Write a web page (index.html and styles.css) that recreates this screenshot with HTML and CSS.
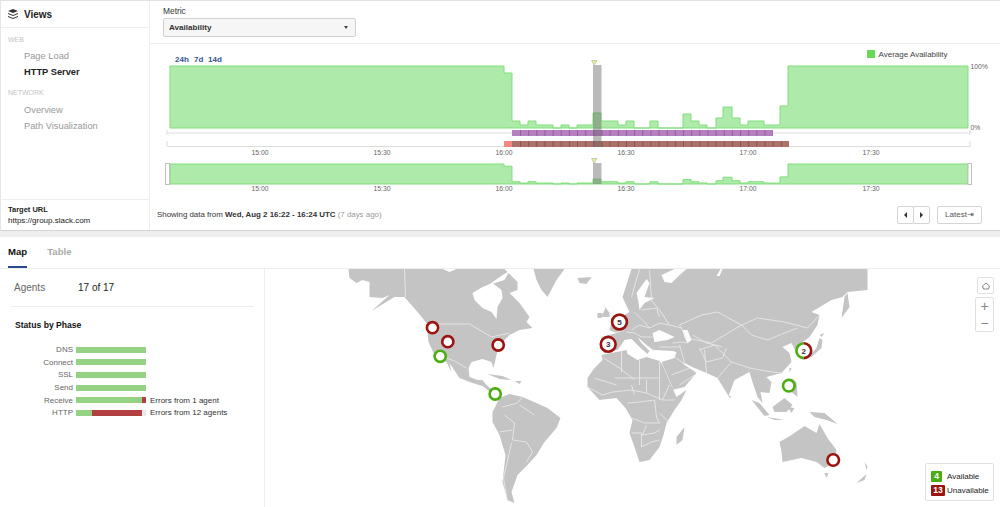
FILE: index.html
```html
<!DOCTYPE html>
<html>
<head>
    <title>HTTP Server - Availability</title>
    <link rel="stylesheet" href="styles.css">
</head>
<body>
<div class="top-panel">
    <div class="sidebar">
        <div class="views-title">
            <svg class="views-icon" viewBox="0 0 10 10">
                <path d="M5 0 L10 2 L5 4 L0 2 Z"/>
                <path d="M0 4 L5 6 L10 4 L10 5 L5 7 L0 5 Z"/>
                <path d="M0 7 L5 9 L10 7 L10 8 L5 10 L0 8 Z"/>
            </svg>
            Views
        </div>
        <div class="nav-section">WEB</div>
        <a class="nav-item">Page Load</a>
        <a class="nav-item active">HTTP Server</a>
        <div class="nav-section second">NETWORK</div>
        <a class="nav-item">Overview</a>
        <a class="nav-item">Path Visualization</a>
        <div class="target">
            <b>Target URL</b>
            <span>https://group.slack.com</span>
        </div>
    </div>
    <div class="main">
        <div class="metric-row">
            <label class="metric-label">Metric</label>
            <div class="select">Availability<span class="caret"></span></div>
        </div>
        <svg class="chart" viewBox="150 44 850 155">
            <defs>
                <path id="series" d="M170 128 V66 H504 V73 H512 V121 H520 V125 H528 V121 H536 V125 H553 V128 H561 V125 H569 V128 H577 V125 H593 V113 H601 V121 H618 V125 H626 V121 H634 V128 H650 V121 H658 V128 H683 V114 H691 V121 H699 V125 H707 V128 H716 V118 H723 V107 H732 V118 H740 V125 H748 V121 H764 V125 H780 V106 H788 V66 H968 V128 Z"/>
            </defs>
            <text class="range" x="175" y="62">24h</text>
            <text class="range" x="194" y="62">7d</text>
            <text class="range" x="208" y="62">14d</text>
            <rect class="legend-swatch" x="867" y="50" width="8" height="8"/>
            <text class="legend-text" x="878.5" y="57">Average Availability</text>
            <use class="area" href="#series"/>
            <text class="axis" x="970.5" y="69">100%</text>
            <text class="axis" x="970.5" y="130">0%</text>

            <path class="track" d="M167 130 V135 M168 133 H970 M970 130 V135"/>
            <path class="track" d="M167 141 V147 M168 146.5 H970 M970 141 V147"/>
            <rect class="bar-purple" x="512" y="130" width="261" height="6"/>
            <line class="ticks-purple" x1="520" y1="133" x2="773" y2="133"/>
            <rect class="bar-pink" x="504" y="141" width="8" height="6"/>
            <rect class="bar-brown" x="512" y="141" width="277" height="6"/>
            <line class="ticks-brown" x1="520" y1="144" x2="785" y2="144"/>
            <rect class="cursor" x="593" y="65" width="8.5" height="82"/>
            <path class="marker-tri" d="M591.5 60.5 H597 L594.2 65 Z"/>
            <text class="axis mid" x="260" y="155">15:00</text>
            <text class="axis mid" x="382" y="155">15:30</text>
            <text class="axis mid" x="504" y="155">16:00</text>
            <text class="axis mid" x="626" y="155">16:30</text>
            <text class="axis mid" x="748" y="155">17:00</text>
            <text class="axis mid" x="871" y="155">17:30</text>

            <use class="area" href="#series" transform="translate(0 142.7) scale(1 .3226)"/>
            <rect class="cursor" x="593" y="163" width="8.5" height="21"/>
            <path class="marker-tri" d="M591.5 158.5 H597 L594.2 163 Z"/>
            <rect class="handle" x="165.5" y="163.5" width="4" height="21"/>
            <rect class="handle" x="968" y="163.5" width="3.5" height="21"/>
            <text class="axis mid" x="260" y="191">15:00</text>
            <text class="axis mid" x="382" y="191">15:30</text>
            <text class="axis mid" x="504" y="191">16:00</text>
            <text class="axis mid" x="626" y="191">16:30</text>
            <text class="axis mid" x="748" y="191">17:00</text>
            <text class="axis mid" x="871" y="191">17:30</text>
        </svg>
        <div class="chart-footer">
            <div class="showing">Showing data from <b>Wed, Aug 2 16:22 - 16:24 UTC</b> <span class="ago">(7 days ago)</span></div>
            <div class="pager">
                <button class="page-btn"><span class="arrow-left"></span></button>
                <button class="page-btn"><span class="arrow-right"></span></button>
            </div>
            <button class="latest-btn">Latest⇥</button>
        </div>
    </div>
</div>

<div class="strip"></div>

<div class="tabs">
    <div class="tab active">Map</div>
    <div class="tab">Table</div>
</div>

<div class="lower">
    <div class="agents-panel">
        <div class="agents-row">
            <span class="agents-label">Agents</span>
            <span class="agents-count">17 of 17</span>
        </div>
        <h4 class="phase-title">Status by Phase</h4>
        <div class="phase-row">
            <span class="phase-name">DNS</span>
            <div class="phase-bar"><i class="ok" style="width: 100%"></i></div>
        </div>
        <div class="phase-row">
            <span class="phase-name">Connect</span>
            <div class="phase-bar"><i class="ok" style="width: 100%"></i></div>
        </div>
        <div class="phase-row">
            <span class="phase-name">SSL</span>
            <div class="phase-bar"><i class="ok" style="width: 100%"></i></div>
        </div>
        <div class="phase-row">
            <span class="phase-name">Send</span>
            <div class="phase-bar"><i class="ok" style="width: 100%"></i></div>
        </div>
        <div class="phase-row">
            <span class="phase-name">Receive</span>
            <div class="phase-bar"><i class="ok" style="width: 94%"></i><i class="err" style="width: 6%"></i></div>
            <span class="phase-note">Errors from 1 agent</span>
        </div>
        <div class="phase-row">
            <span class="phase-name">HTTP</span>
            <div class="phase-bar"><i class="ok" style="width: 23%"></i><i class="err" style="width: 71%"></i></div>
            <span class="phase-note">Errors from 12 agents</span>
        </div>
    </div>

    <div class="map">
        <svg class="world" viewBox="266 269 734 238">
            <g class="land">
                <polygon points="349,269 350,278 357,283 363,280 370,282 370,297 383,298 390,295 372,311 395,297 405,297 418,312 427,323 429,342 435,355 447,362 452,372 450,363 460,378 473,383 483,386 492,393 500,398 502,393 493,390 487,385 483,380 478,380 470,377 469,368 472,362 483,359 492,362 494,368 497,355 500,345 510,335 520,330 533,328 527,322 530,317 520,303 510,293 518,290 518,282 505,269"/>
                <polygon points="534,269 565,269 557,280 548,297 542,290 537,280"/>
                <polygon points="578,278 592,277 587,284 580,283"/>
                <polygon points="488,374 503,376 512,380 500,379"/>
                <polygon points="515,381 522,381 520,384"/>
                <polygon points="493,412 500,398 510,394 523,397 537,403 548,408 561,418 557,428 545,442 537,455 528,465 518,475 512,492 515,503 508,500 503,482 506,455 500,435 493,422"/>
                <polygon points="603,360 602,355 627,350 628,354 638,360 647,357 660,361 663,365 673,388 677,397 687,390 682,400 675,410 667,423 664,435 660,447 650,460 640,462 635,447 630,433 633,420 626,408 617,398 600,400 588,387 588,378 595,368"/>
                <polygon points="632,269 623,297 628,308 630,312 625,315 613,318 610,330 617,333 602,337 600,348 605,353 618,350 625,340 632,339 640,347 648,354 650,351 642,343 638,337 647,345 655,351 653,340 655,350 673,351 677,352 675,358 662,362 673,387 672,390 685,387 697,373 693,370 685,365 683,362 695,368 707,373 718,378 729,396 735,380 750,372 753,382 758,397 763,403 761,392 770,393 772,382 767,377 782,373 792,362 790,353 783,347 792,343 798,355 802,343 810,337 818,325 820,315 812,312 832,300 843,297 848,292 868,290 868,269"/>
                <polygon points="603,303 610,313 610,317 602,317 606,308"/>
                <polygon points="598,313 603,313 602,318 598,318"/>
                <polygon points="808,358 817,348 820,338 823,340 822,348 812,357"/>
                <polygon points="820,335 825,333 822,337"/>
                <polygon points="842,318 845,297 848,293 850,307"/>
                <polygon points="790,368 792,368 790,373"/>
                <polygon points="792,378 797,382 798,397 792,392"/>
                <polygon points="773,407 785,398 793,405 787,412 775,412"/>
                <polygon points="752,400 760,403 770,415 765,416"/>
                <polygon points="768,417 785,420 775,420"/>
                <polygon points="788,407 795,408 792,413"/>
                <polygon points="810,412 825,413 838,424 827,420 815,417"/>
                <polygon points="780,442 792,435 805,426 817,433 820,424 828,438 837,450 835,462 825,468 817,462 802,458 783,462 782,452"/>
                <polygon points="825,473 829,473 827,478"/>
                <polygon points="857,483 867,474 865,480"/>
                <polygon points="865,462 868,467 867,470"/>
                <polygon points="685,427 683,440 677,445 677,437"/>
                <polygon points="729,395 732,397 730,398"/>
            </g>
            <g class="water">
                <polygon points="473,293 483,287 493,283 502,290 503,298 498,307 497,319 492,312 483,308 475,300"/>
                <polygon points="443,269 457,269 450,272"/>
                <polygon points="489,285 503,275 510,271 505,280"/>
                <polygon points="639,302 637,293 647,279 650,283 645,297 655,298 645,303 640,310"/>
                <polygon points="653,333 660,330 675,337 668,340 655,342"/>
                <polygon points="683,330 688,330 692,340 688,343 685,337"/>
                <polygon points="662,275 675,269 687,269 678,277 672,283 665,282"/>
                <polygon points="717,276 721,269 723,269 720,276"/>
            </g>
            <g class="borders">
                <polyline points="405,269 406,297"/>
                <polyline points="431,324 470,324 492,337 510,333"/>
                <polyline points="436,354 455,361 467,368"/>
                <polyline points="503,407 518,403 523,397"/>
                <polyline points="505,415 515,423 513,440 527,442 533,452 527,462"/>
                <polyline points="512,443 504,478 508,502"/>
                <polyline points="513,430 500,432"/>
                <polyline points="520,405 535,415"/>
                <polyline points="604,358 620,368 635,380"/>
                <polyline points="622,350 622,372"/>
                <polyline points="640,360 640,385"/>
                <polyline points="615,378 660,378"/>
                <polyline points="595,378 617,385"/>
                <polyline points="660,362 660,400"/>
                <polyline points="588,387 603,395 613,392 632,390 647,393 663,400 675,400"/>
                <polyline points="628,403 640,402 655,400 657,417 660,423 645,423 632,418"/>
                <polyline points="647,425 643,435 655,433 660,430"/>
                <polyline points="632,433 642,433 642,447 652,442 660,440"/>
                <polyline points="660,413 670,423"/>
                <polyline points="635,395 632,385"/>
                <polyline points="647,393 647,380"/>
                <polyline points="663,400 670,385"/>
                <polyline points="680,325 702,315 718,312 742,325 758,318 785,322 808,328 820,315"/>
                <polyline points="742,325 752,335 768,340 785,333 798,328"/>
                <polyline points="715,345 732,362 750,368 772,372 782,373"/>
                <polyline points="680,325 687,338 712,343 742,325"/>
                <polyline points="693,335 707,343 723,347"/>
                <polyline points="700,348 707,362 723,358 727,348"/>
                <polyline points="700,350 715,345"/>
                <polyline points="680,345 685,362"/>
                <polyline points="705,350 707,373"/>
                <polyline points="660,347 680,347"/>
                <polyline points="650,298 660,310 670,325 682,328"/>
                <polyline points="632,330 640,325 650,328 660,323 670,325"/>
                <polyline points="635,312 645,322 650,328"/>
                <polyline points="642,310 657,308 660,317"/>
                <polyline points="627,332 635,333 642,337 653,337"/>
                <polyline points="673,343 683,342 688,343"/>
                <polyline points="615,333 625,330"/>
                <polyline points="650,270 652,298"/>
                <polyline points="640,269 632,297"/>
                <polyline points="673,355 690,368"/>
                <polyline points="672,375 690,368"/>
                <polyline points="680,385 695,375"/>
                <polyline points="732,362 718,378"/>
                <polyline points="767,377 775,385"/>
            </g>
            <circle class="pin down" cx="433" cy="327.7" r="5.6"/>
            <circle class="pin down" cx="448.3" cy="341.7" r="5.6"/>
            <circle class="pin down" cx="498.7" cy="345" r="5.6"/>
            <circle class="pin up" cx="440.7" cy="356.3" r="5.6"/>
            <circle class="pin up" cx="495.7" cy="394" r="5.6"/>
            <circle class="pin up" cx="789.3" cy="385.7" r="5.8"/>
            <circle class="pin down" cx="833.7" cy="460" r="5.8"/>
            <circle class="pin down" cx="620" cy="322" r="7.4"/>
            <text class="pin-count" x="620" y="325">5</text>
            <circle class="pin down" cx="608.7" cy="344.3" r="7.4"/>
            <text class="pin-count" x="608.7" y="347.3">3</text>
            <circle class="pin-bg" cx="804.3" cy="350.7" r="7.4"/>
            <path class="arc up" d="M804.3 343.3 A7.4 7.4 0 0 0 804.3 358.1"/>
            <path class="arc down" d="M804.3 343.3 A7.4 7.4 0 0 1 804.3 358.1"/>
            <text class="pin-count" x="804.3" y="353.7">2</text>
        </svg>

        <button class="map-btn home">
            <svg viewBox="0 0 8 8"><path d="M4 1 L7.5 4 L6.5 7 H1.5 L.5 4 Z"/></svg>
        </button>
        <div class="zoom-group">
            <div class="zoom-btn">+</div>
            <div class="zoom-btn">−</div>
        </div>
        <div class="map-legend">
            <div class="legend-row"><span class="chip green">4</span>Available</div>
            <div class="legend-row"><span class="chip red">13</span>Unavailable</div>
        </div>
    </div>
</div>
</body>
</html>
```

FILE: styles.css
```css
html, body {
    margin: 0;
    height: 507px;
    overflow: hidden;
}

body {
    font-family: "Liberation Sans", Arial, sans-serif;
    background-color: #fff;
    color: #222;
    font-size: 8px;
}

.top-panel {
    display: flex;
    height: 231px;
    box-sizing: border-box;
    border-top: 1px solid #e2e2e2;
    border-bottom: 1px solid #d4d4d4;
    border-left: 1px solid #e6e6e6;
}

.sidebar {
    width: 148px;
    flex-shrink: 0;
    display: flex;
    flex-direction: column;
    border-right: 1px solid #eee;
}

.views-title {
    display: flex;
    align-items: center;
    height: 26px;
    padding-left: 7px;
    font-size: 10px;
    font-weight: bold;
    color: #222;
    border-bottom: 1px solid #eee;
}

.views-icon {
    width: 10px;
    height: 10px;
    margin-right: 6px;
    fill: #333;
}

.nav-section {
    margin: 8px 0 4px 7px;
    font-size: 7px;
    line-height: 8px;
    color: #c4c4c4;
}

.nav-section.second {
    margin: 9px 0 5px 7px;
}

.nav-item {
    display: block;
    height: 16px;
    padding-left: 23px;
    font-size: 9.3px;
    line-height: 16px;
    color: #999;
}

.nav-item.active {
    font-weight: bold;
    color: #222;
}

.target {
    margin-top: auto;
    padding: 4px 0 4px 7px;
    border-top: 1px solid #eee;
    font-size: 8px;
    line-height: 11px;
}

.target b,
.target span {
    display: block;
}

.target b {
    font-size: 7.5px;
}

.main {
    flex: 1;
    display: flex;
    flex-direction: column;
    min-width: 0;
}

.metric-row {
    height: 43px;
    box-sizing: border-box;
    padding: 5px 0 0 13px;
    border-bottom: 1px solid #eee;
}

.metric-label {
    display: block;
    font-size: 8.4px;
    line-height: 11px;
    color: #333;
}

.select {
    display: flex;
    align-items: center;
    justify-content: space-between;
    width: 193px;
    height: 19px;
    margin-top: 1px;
    padding: 0 5px;
    box-sizing: border-box;
    background-color: #f6f6f6;
    border: 1px solid #d0d0d0;
    border-radius: 2px;
    font-size: 8.1px;
    font-weight: bold;
    color: #333;
}

.caret {
    width: 0;
    height: 0;
    margin-right: 2px;
    border-left: 2.5px solid transparent;
    border-right: 2.5px solid transparent;
    border-top: 3px solid #444;
}

.chart {
    display: block;
    width: 850px;
    height: 155px;
    flex-shrink: 0;
}

.range {
    font-size: 8px;
    font-weight: bold;
    fill: #34558f;
}

.legend-swatch {
    fill: #66d955;
}

.legend-text {
    font-size: 8px;
    fill: #444;
}

.area {
    fill: #aeebaa;
    stroke: #80df7c;
    stroke-width: 1;
}

#series {
    vector-effect: non-scaling-stroke;
}

.axis {
    font-size: 6.8px;
    fill: #666;
}

.axis.mid {
    text-anchor: middle;
}

.track {
    fill: none;
    stroke: #dcdcdc;
    stroke-width: 1;
}

.bar-purple {
    fill: #b67fc0;
}

.ticks-purple {
    stroke: #925f9f;
    stroke-width: 6;
    stroke-dasharray: 1 7.15;
}

.bar-pink {
    fill: #f4877e;
}

.bar-brown {
    fill: #ad716b;
}

.ticks-brown {
    stroke: #8a5550;
    stroke-width: 6;
    stroke-dasharray: 1 7.15;
}

.cursor {
    fill: #666;
    fill-opacity: .45;
}

.marker-tri {
    fill: #eef08a;
    stroke: #aaa;
    stroke-width: .6;
}

.handle {
    fill: #fff;
    stroke: #c0c0c0;
    stroke-width: 1;
}

.chart-footer {
    flex: 1;
    display: flex;
    align-items: center;
    padding: 0 18px 0 7px;
    font-size: 7.9px;
    color: #333;
}

.ago {
    color: #999;
}

.pager {
    display: flex;
    margin-left: auto;
}

.page-btn,
.latest-btn {
    height: 18px;
    padding: 0;
    background-color: #fff;
    border: 1px solid #d4d4d4;
    border-radius: 2px;
    font-family: inherit;
    font-size: 8px;
    color: #555;
}

.page-btn {
    display: flex;
    align-items: center;
    justify-content: center;
    width: 17px;
}

.page-btn + .page-btn {
    margin-left: -1px;
}

.arrow-left,
.arrow-right {
    width: 0;
    height: 0;
    border-top: 3px solid transparent;
    border-bottom: 3px solid transparent;
}

.arrow-left {
    border-right: 3.5px solid #333;
}

.arrow-right {
    border-left: 3.5px solid #333;
}

.latest-btn {
    width: 45px;
    margin-left: 7px;
}

.strip {
    height: 6px;
    background-color: #eee;
}

.tabs {
    display: flex;
    height: 32px;
    box-sizing: border-box;
    padding-left: 8px;
    border-bottom: 1px solid #eee;
}

.tab {
    height: 31px;
    box-sizing: border-box;
    margin-right: 20px;
    padding-top: 9px;
    font-size: 9.6px;
    font-weight: bold;
    color: #aaa;
}

.tab.active {
    color: #111;
    border-bottom: 2px solid #2a4a8f;
}

.lower {
    display: flex;
    height: 238px;
}

.agents-panel {
    width: 265px;
    flex-shrink: 0;
    box-sizing: border-box;
    border-right: 1px solid #eee;
    padding: 0 10px 0 11px;
}

.agents-row {
    display: flex;
    align-items: center;
    height: 37px;
    padding-left: 3px;
    border-bottom: 1px solid #eee;
    font-size: 10px;
}

.agents-label {
    width: 64px;
    color: #666;
}

.agents-count {
    color: #222;
}

.phase-title {
    margin: 12px 0 12.5px 4px;
    font-size: 8.6px;
    line-height: 12px;
    color: #111;
}

.phase-row {
    display: flex;
    align-items: center;
    height: 12.6px;
    font-size: 8px;
    color: #666;
}

.phase-name {
    width: 62px;
    text-align: right;
}

.phase-bar {
    display: flex;
    width: 70px;
    height: 6px;
    margin: 0 4px 0 3px;
    background-color: #eaeaea;
}

.phase-bar i {
    display: block;
    height: 100%;
}

.phase-bar .ok {
    background-color: #96d283;
}

.phase-bar .err {
    background-color: #b24040;
}

.phase-note {
    color: #333;
}

.map {
    flex: 1;
    position: relative;
    overflow: hidden;
}

.world {
    display: block;
    width: 735px;
    height: 238px;
}

.land polygon {
    fill: #c4c4c4;
}

.water polygon {
    fill: #fff;
}

.borders polyline {
    fill: none;
    stroke: #ececec;
    stroke-width: .8;
}

.pin {
    fill: #fff;
    stroke-width: 2.6;
}

.pin.down {
    stroke: #9c1410;
}

.pin.up {
    stroke: #4cad12;
}

.pin-bg {
    fill: #fff;
}

.arc {
    fill: none;
    stroke-width: 2.6;
}

.arc.up {
    stroke: #4cad12;
}

.arc.down {
    stroke: #9c1410;
}

.pin-count {
    font-size: 8px;
    font-weight: bold;
    text-anchor: middle;
    fill: #333;
}

.map-btn,
.zoom-group,
.map-legend {
    position: absolute;
    background-color: #fff;
    border: 1px solid #e0e0e0;
    border-radius: 2px;
}

.map-btn {
    top: 8px;
    right: 6px;
    display: flex;
    align-items: center;
    justify-content: center;
    width: 17px;
    height: 17px;
    padding: 0;
}

.map-btn svg {
    width: 8px;
    height: 8px;
    fill: none;
    stroke: #666;
    stroke-width: .8;
}

.zoom-group {
    top: 28px;
    right: 6px;
    width: 17px;
}

.zoom-btn {
    height: 16.5px;
    font-size: 14px;
    line-height: 16px;
    text-align: center;
    color: #888;
}

.map-legend {
    right: 6px;
    bottom: 6px;
    width: 69px;
    height: 38px;
    box-sizing: border-box;
    padding: 5px 0 0 5px;
    font-size: 8px;
    color: #222;
}

.legend-row {
    display: flex;
    align-items: center;
    height: 14px;
}

.chip {
    min-width: 10px;
    height: 11px;
    margin-right: 5px;
    padding: 0 1px;
    box-sizing: border-box;
    border-radius: 1px;
    font-size: 8.5px;
    font-weight: bold;
    line-height: 11px;
    text-align: center;
    color: #fff;
}

.chip.green {
    width: 11px;
    background-color: #4cad12;
}

.chip.red {
    width: 14px;
    margin-right: 2px;
    background-color: #9c1410;
}
```
